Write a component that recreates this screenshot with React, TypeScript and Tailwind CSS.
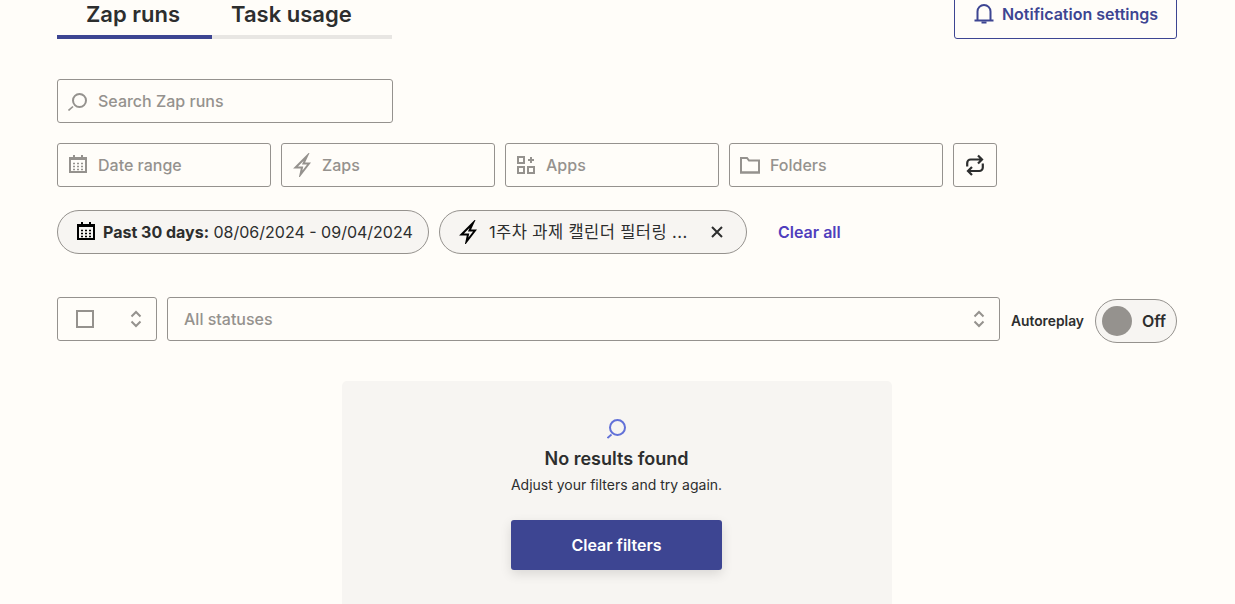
const font = { fontFamily: 'Inter, "Noto Sans CJK KR", sans-serif' };

function SearchIcon({ className = "" }: { className?: string }) {
  return (
    <svg viewBox="0 0 20 20" className={className} fill="none" stroke="currentColor">
      <circle cx="11.500" cy="9.500" r="6.500" strokeWidth="2" />
      <path d="M5 15.500 L0.500 19.500" strokeWidth="1.600" />
    </svg>
  );
}

function EmptySearchIcon({ className = "" }: { className?: string }) {
  return (
    <svg viewBox="0 0 20 20" className={className} fill="none" stroke="currentColor">
      <circle cx="10.500" cy="8.500" r="7.500" strokeWidth="2" />
      <path d="M4.500 15.500 L0.500 19" strokeWidth="1.800" />
    </svg>
  );
}

function CalendarIcon({ className = "" }: { className?: string }) {
  return (
    <svg viewBox="0 0 18 18" className={className} fill="none" stroke="currentColor" strokeWidth="2">
      <path d="M1 3h16v14H1z" />
      <path d="M5 0v3M13 0v3M1 4h16" />
      <path d="M4 8.500h2M8 8.500h2M12 8.500h2M4 11.500h2M8 11.500h2M12 11.500h2M4 14.500h2M8 14.500h2M12 14.500h2" strokeWidth="1.600" />
    </svg>
  );
}

function BoltIcon({ className = "" }: { className?: string }) {
  return (
    <svg viewBox="0 0 18 24" className={className} fill="none" stroke="currentColor" strokeWidth="2" strokeMiterlimit="10">
      <path d="M14 3 2.500 14.500H9L7.500 21.500 16 10.500H10.500z" />
    </svg>
  );
}

function AppsIcon({ className = "" }: { className?: string }) {
  return (
    <svg viewBox="0 0 18 18" className={className} fill="none" stroke="currentColor" strokeWidth="2">
      <path d="M1 1h6v6H1zM1 11h6v6H1zM11 11h6v6h-6zM14 1v6M11 4h6" />
    </svg>
  );
}

function FolderIcon({ className = "" }: { className?: string }) {
  return (
    <svg viewBox="0 0 20 18" className={className} fill="none" stroke="currentColor" strokeWidth="2">
      <path d="M1 16.500V2h6l2 2.500h10V16.500z" />
      <path d="M0 16.500h20" />
    </svg>
  );
}

function RepeatIcon({ className = "" }: { className?: string }) {
  return (
    <svg viewBox="0 0 18 22" className={className} fill="none" stroke="currentColor" strokeWidth="2.200">
      <path d="M1.200 12.500V9a3.500 3.500 0 0 1 3.500-3.500H16M12 1.500l4 4-4 4" />
      <path d="M16.800 9.500v4a3.500 3.500 0 0 1-3.500 3.500H2M6 13l-4 4 4 4" />
    </svg>
  );
}

function BellIcon({ className = "" }: { className?: string }) {
  return (
    <svg viewBox="0 0 20 20" className={className} fill="none" stroke="currentColor" strokeWidth="2">
      <path d="M0.500 16.500h19M3.500 16.500V7.500a6.500 6.500 0 0 1 13 0V16.500" />
      <path d="M7.500 18.500h5" />
    </svg>
  );
}

function Chevrons({ className = "" }: { className?: string }) {
  return (
    <svg viewBox="0 0 12 18" className={className} fill="none" stroke="currentColor" strokeWidth="2">
      <path d="M1.500 6.500 6 2l4.500 4.500M1.500 11.500 6 16l4.500-4.500" />
    </svg>
  );
}

function FilterBox({ icon, label }: { icon: React.ReactNode; label: string }) {
  return (
    <div className="flex h-[44px] w-[214px] items-center rounded-[3px] border border-[#95928e] pl-[11px] text-[16px] font-[450] text-[#95928e]">
      <span className="flex w-[20px] items-center">{icon}</span>
      <span className="ml-[9px]">{label}</span>
    </div>
  );
}

export default function App() {
  return (
    <div
      className="h-[604px] w-full overflow-hidden bg-[#fffdf9] pl-[57px] pr-[58px] text-[#2d2e2e]"
      style={font}
    >
      <div className="flex h-[39px] items-end justify-between">
        <div className="flex w-[335px] border-b-4 border-[#e8e6e3]">
          <div className="-mb-[4px] h-[39px] w-[155px] border-b-4 border-[#3d4592] pl-[29px] text-[22px] font-semibold leading-[28px]">
            Zap runs
          </div>
          <div className="h-[35px] pl-[19px] text-[22px] font-semibold leading-[28px]">Task usage</div>
        </div>
        <div className="flex h-[50px] w-[223px] items-center justify-center gap-[8px] rounded-[3px] border border-[#3d4592] pl-[1px] text-[16px] font-semibold text-[#3d4592]">
          <BellIcon className="mb-[1px] h-[20px] w-[20px]" />
          <span>Notification settings</span>
        </div>
      </div>

      <div className="mt-[40px] flex h-[44px] w-[336px] items-center rounded-[3px] border border-[#95928e] pl-[10px] text-[16px] font-[450] text-[#95928e]">
        <SearchIcon className="h-[20px] w-[20px]" />
        <span className="ml-[10px]">Search Zap runs</span>
      </div>

      <div className="mt-[20px] flex gap-[10px]">
        <FilterBox icon={<CalendarIcon className="mb-[2px] h-[18px] w-[18px]" />} label="Date range" />
        <FilterBox icon={<BoltIcon className="h-[24px] w-[18px]" />} label="Zaps" />
        <FilterBox icon={<AppsIcon className="h-[18px] w-[18px]" />} label="Apps" />
        <FilterBox icon={<FolderIcon className="-ml-[1px] h-[18px] w-[20px]" />} label="Folders" />
        <div className="flex h-[44px] w-[44px] items-center justify-center rounded-[3px] border border-[#95928e] text-[#2d2e2e]">
          <RepeatIcon className="h-[22px] w-[18px]" />
        </div>
      </div>

      <div className="mt-[23px] flex items-center">
        <div className="flex h-[44px] w-[372px] items-center rounded-full border border-[#95928e] bg-[#f7f5f2] pl-[19px] text-[16px]">
          <CalendarIcon className="mb-[2px] h-[18px] w-[18px] text-black" />
          <span className="ml-[8px] whitespace-nowrap">
            <b className="font-bold">Past 30 days:</b> 08/06/2024 - 09/04/2024
          </span>
        </div>
        <div className="ml-[10px] flex h-[44px] w-[308px] items-center rounded-full border border-[#95928e] bg-[#f7f5f2] pl-[19px] text-[16px]">
          <BoltIcon className="h-[24px] w-[18px] text-black" />
          <span className="ml-[12px] whitespace-nowrap text-[16.500px] tracking-[0.4px]">1주차 과제 캘린더 필터링 ...</span>
          <svg viewBox="0 0 12 12" className="ml-[23px] h-[12px] w-[12px]" fill="none" stroke="currentColor" strokeWidth="2">
            <path d="M1 1l10 10M11 1 1 11" />
          </svg>
        </div>
        <span className="ml-[31px] text-[16px] font-semibold text-[#503ebd]">Clear all</span>
      </div>

      <div className="mt-[43px] flex items-start">
        <div className="flex h-[44px] w-[100px] items-center rounded-[3px] border border-[#95928e] pl-[18px] text-[#95928e]">
          <span className="h-[18px] w-[18px] border-2 border-[#95928e]" />
          <Chevrons className="ml-[36px] h-[18px] w-[12px]" />
        </div>
        <div className="ml-[10px] flex h-[44px] w-[833px] items-center justify-between rounded-[3px] border border-[#95928e] pl-[16px] pr-[14px] text-[16px] font-[450] text-[#95928e]">
          <span>All statuses</span>
          <Chevrons className="h-[18px] w-[12px]" />
        </div>
        <div className="ml-[11px] flex h-[48px] items-center pt-[1px] text-[13.800px] font-semibold leading-none">Autoreplay</div>
        <div className="ml-auto mt-[2px] flex h-[44px] w-[82px] items-center rounded-full border border-[#95928e] bg-[#f7f5f2] pl-[6px]">
          <span className="h-[30px] w-[30px] rounded-full bg-[#95928e]" />
          <span className="ml-[10px] text-[16px] font-semibold">Off</span>
        </div>
      </div>

      <div className="mx-auto mt-[36px] flex h-[240px] w-[550px] flex-col items-center rounded-[5px] bg-[#f7f5f2] pr-[1px] pt-[38px]">
        <EmptySearchIcon className="h-[20px] w-[20px] text-[#6271d8]" />
        <div className="mt-[8px] text-[18px] font-semibold leading-[24px]">No results found</div>
        <div className="mt-[3px] text-[14px] leading-[22px]">Adjust your filters and try again.</div>
        <div className="mt-[24px] flex h-[50px] w-[211px] items-center justify-center rounded-[3px] bg-[#3d4592] text-[16px] font-semibold text-white shadow-[0_4px_12px_rgba(0,0,0,0.12)]">
          Clear filters
        </div>
      </div>
    </div>
  );
}
